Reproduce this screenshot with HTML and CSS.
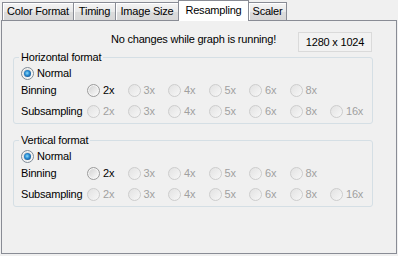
FILE: index.html
```html
<!DOCTYPE html>
<html lang="en">
<head>
  <meta charset="UTF-8">
  <title>Resampling</title>
  <link rel="stylesheet" href="styles.css">
</head>
<body>
  <!-- Tab strip -->
  <div class="tabs">
    <div class="tab tab-color">Color Format</div>
    <div class="tab tab-timing">Timing</div>
    <div class="tab tab-size">Image Size</div>
    <div class="tab tab-resampling active">Resampling</div>
    <div class="tab tab-scaler">Scaler</div>
  </div>

  <!-- Page -->
  <div class="panel">
    <div class="status">
      <span class="msg">No changes while graph is running!</span>
      <span class="res">1280 x 1024</span>
    </div>

    <fieldset class="group">
      <legend>Horizontal format</legend>
      <div class="row">
        <label class="opt"><span class="radio checked"></span>Normal</label>
      </div>
      <div class="row grid binning">
        <span class="label">Binning</span>
        <label class="opt"><span class="radio"></span>2x</label>
        <label class="opt off"><span class="radio"></span>3x</label>
        <label class="opt off"><span class="radio"></span>4x</label>
        <label class="opt off"><span class="radio"></span>5x</label>
        <label class="opt off"><span class="radio"></span>6x</label>
        <label class="opt off"><span class="radio"></span>8x</label>
      </div>
      <div class="row grid sub">
        <span class="label">Subsampling</span>
        <label class="opt off"><span class="radio"></span>2x</label>
        <label class="opt off"><span class="radio"></span>3x</label>
        <label class="opt off"><span class="radio"></span>4x</label>
        <label class="opt off"><span class="radio"></span>5x</label>
        <label class="opt off"><span class="radio"></span>6x</label>
        <label class="opt off"><span class="radio"></span>8x</label>
        <label class="opt off"><span class="radio"></span>16x</label>
      </div>
    </fieldset>

    <fieldset class="group second">
      <legend>Vertical format</legend>
      <div class="row">
        <label class="opt"><span class="radio checked"></span>Normal</label>
      </div>
      <div class="row grid binning">
        <span class="label">Binning</span>
        <label class="opt"><span class="radio"></span>2x</label>
        <label class="opt off"><span class="radio"></span>3x</label>
        <label class="opt off"><span class="radio"></span>4x</label>
        <label class="opt off"><span class="radio"></span>5x</label>
        <label class="opt off"><span class="radio"></span>6x</label>
        <label class="opt off"><span class="radio"></span>8x</label>
      </div>
      <div class="row grid sub">
        <span class="label">Subsampling</span>
        <label class="opt off"><span class="radio"></span>2x</label>
        <label class="opt off"><span class="radio"></span>3x</label>
        <label class="opt off"><span class="radio"></span>4x</label>
        <label class="opt off"><span class="radio"></span>5x</label>
        <label class="opt off"><span class="radio"></span>6x</label>
        <label class="opt off"><span class="radio"></span>8x</label>
        <label class="opt off"><span class="radio"></span>16x</label>
      </div>
    </fieldset>
  </div>
</body>
</html>
```

FILE: styles.css
```css
body {
  font-family: "Liberation Sans", Arial, sans-serif;
  font-size: 11px;
  letter-spacing: -0.2px;
  color: #000;
  margin: 0;
  padding: 0;
  background-color: #f0f0f0;
  width: 398px;
  height: 256px;
  overflow: hidden;
}

/* Tabs */
.tabs {
  display: flex;
  align-items: flex-end;
  height: 20px;
  padding-left: 2px;
}
.tab {
  box-sizing: border-box;
  height: 18px;
  line-height: 17px;
  margin-right: -1px;
  text-align: center;
  border: 1px solid #898c95;
  border-bottom: none;
  background: linear-gradient(#f4f4f4, #e9e9e9 50%, #dcdcdc 51%, #d8d8d8);
  box-shadow: inset 1px 1px 0 #fff;
}
.tab-color { width: 72px; }
.tab-timing { width: 43px; }
.tab-size { width: 64px; }
.tab-resampling { width: 71px; }
.tab-scaler { width: 39px; }
.tab.active {
  position: relative;
  z-index: 1;
  height: 21px;
  line-height: 18px;
  margin-bottom: -1px;
  background: #fff;
  box-shadow: none;
}

/* Page */
.panel {
  box-sizing: border-box;
  height: 234px;
  margin: 0 1px;
  padding-top: 11px;
  border: 1px solid #898c95;
  background-color: #f0f0f0;
}
.status {
  display: flex;
  justify-content: flex-end;
  padding-right: 24px;
}
.msg {
  margin-right: 22px;
  line-height: 14px;
}
.res {
  box-sizing: border-box;
  width: 74px;
  height: 20px;
  line-height: 18px;
  text-align: center;
  border: 1px solid #dadada;
  background-color: #f2f2f2;
}

/* Group boxes */
.group {
  margin: -1px 23px 0 11px;
  padding: 1px 6px 4px 7px;
  border: 1px solid #d5dfe5;
  border-radius: 3px;
  min-width: 0;
}
.group.second {
  margin-top: 10px;
}
.group legend {
  padding: 0 2px;
  margin-left: -2px;
  line-height: 13px;
}
.row {
  height: 16px;
  display: flex;
  align-items: center;
}
.row.binning {
  margin-top: 1px;
}
.row.sub {
  margin-top: 5px;
}
.row.grid {
  display: grid;
  grid-template-columns: 66px repeat(7, 40.5px);
}

/* Radio buttons */
.opt {
  display: flex;
  align-items: center;
  gap: 3px;
}
.opt.off {
  color: #a0a0a0;
}
.radio {
  box-sizing: border-box;
  display: flex;
  align-items: center;
  justify-content: center;
  width: 13px;
  height: 13px;
  border-radius: 50%;
  border: 1px solid #9c9c9c;
  background: linear-gradient(135deg, #cfcfcf, #f2f2f2 75%, #fff);
  box-shadow: inset 0 0 0 1px #f6f6f6;
}
.opt.off .radio {
  border-color: #cdcdcd;
  background: linear-gradient(135deg, #e2e2e2, #f7f7f7);
  box-shadow: none;
}
.radio.checked {
  border-color: #7f8b96;
}
.radio.checked::after {
  content: "";
  width: 7px;
  height: 7px;
  border-radius: 50%;
  background: radial-gradient(circle at 45% 45%, #8fdcf8 0, #2b8fd6 40%, #0e4683 85%);
}
```
